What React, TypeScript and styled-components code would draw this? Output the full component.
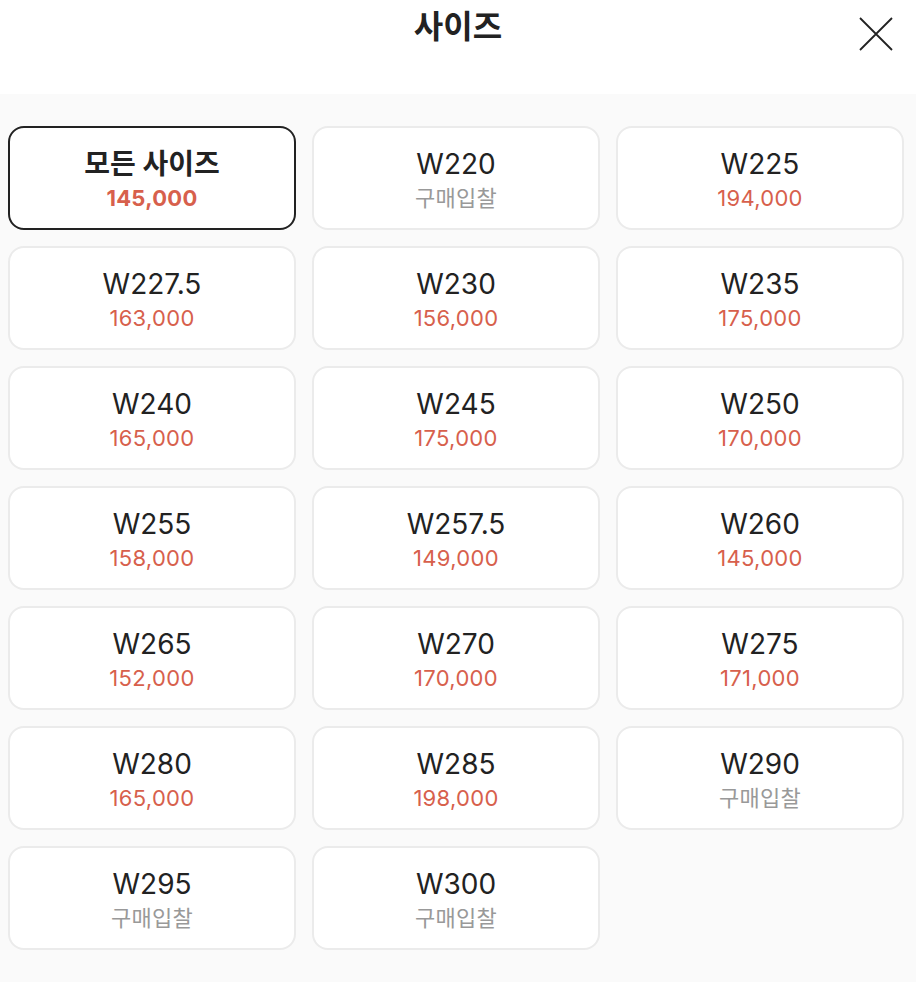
import styled, { createGlobalStyle } from 'styled-components'

const GlobalStyle = createGlobalStyle`
  body {
    margin: 0;
    background: #fafafa;
    font-family: Inter, "Noto Sans CJK KR", sans-serif;
  }
`

type Size = { label: string; price?: string }

const sizes: Size[] = [
  { label: '모든 사이즈', price: '145,000' },
  { label: 'W220' },
  { label: 'W225', price: '194,000' },
  { label: 'W227.5', price: '163,000' },
  { label: 'W230', price: '156,000' },
  { label: 'W235', price: '175,000' },
  { label: 'W240', price: '165,000' },
  { label: 'W245', price: '175,000' },
  { label: 'W250', price: '170,000' },
  { label: 'W255', price: '158,000' },
  { label: 'W257.5', price: '149,000' },
  { label: 'W260', price: '145,000' },
  { label: 'W265', price: '152,000' },
  { label: 'W270', price: '170,000' },
  { label: 'W275', price: '171,000' },
  { label: 'W280', price: '165,000' },
  { label: 'W285', price: '198,000' },
  { label: 'W290' },
  { label: 'W295' },
  { label: 'W300' },
]

export default function App() {
  return (
    <Page>
      <GlobalStyle />
      <Header>
        <Title>사이즈</Title>
        <CloseButton aria-label="닫기">
          <svg width="34" height="34" viewBox="0 0 34 34">
            <path d="M1 1L33 33M33 1L1 33" stroke="#222" strokeWidth="1.8" fill="none" />
          </svg>
        </CloseButton>
      </Header>
      <Grid>
        {sizes.map((s, i) => (
          <Card key={s.label} $selected={i === 0}>
            <SizeLabel $selected={i === 0}>{s.label}</SizeLabel>
            <Price $bid={!s.price} $selected={i === 0}>
              {s.price ?? '구매입찰'}
            </Price>
          </Card>
        ))}
      </Grid>
    </Page>
  )
}

const Page = styled.div`
  width: 916px;
  min-height: 982px;
  background: #fafafa;
`

const Header = styled.div`
  position: relative;
  height: 94px;
  background: #fff;
  display: flex;
  justify-content: center;
`

const Title = styled.h1`
  margin: 0;
  padding-top: 4px;
  font-size: 32px;
  font-weight: 700;
  color: #222;
  line-height: 46px;
`

const CloseButton = styled.button`
  position: absolute;
  top: 17px;
  right: 23px;
  padding: 0;
  border: none;
  background: none;
  display: flex;
  cursor: pointer;
`

const Grid = styled.div`
  display: grid;
  grid-template-columns: repeat(3, 288px);
  gap: 16px;
  padding: 32px 8px;
`

const Card = styled.div<{ $selected: boolean }>`
  box-sizing: border-box;
  height: 104px;
  border-radius: 16px;
  background: #fff;
  border: 2px solid ${(p) => (p.$selected ? '#222' : '#ebebeb')};
  display: flex;
  flex-direction: column;
  align-items: center;
  justify-content: center;
  padding-top: 3px;
`

const SizeLabel = styled.div<{ $selected: boolean }>`
  font-size: 28px;
  line-height: 36px;
  color: #222;
  font-weight: ${(p) => (p.$selected ? 700 : 400)};
`

const Price = styled.div<{ $bid: boolean; $selected: boolean }>`
  font-size: 22px;
  line-height: 32px;
  letter-spacing: 0.3px;
  color: ${(p) => (p.$bid ? '#999' : '#d7604c')};
  font-weight: ${(p) => (p.$selected ? 700 : 400)};
`
